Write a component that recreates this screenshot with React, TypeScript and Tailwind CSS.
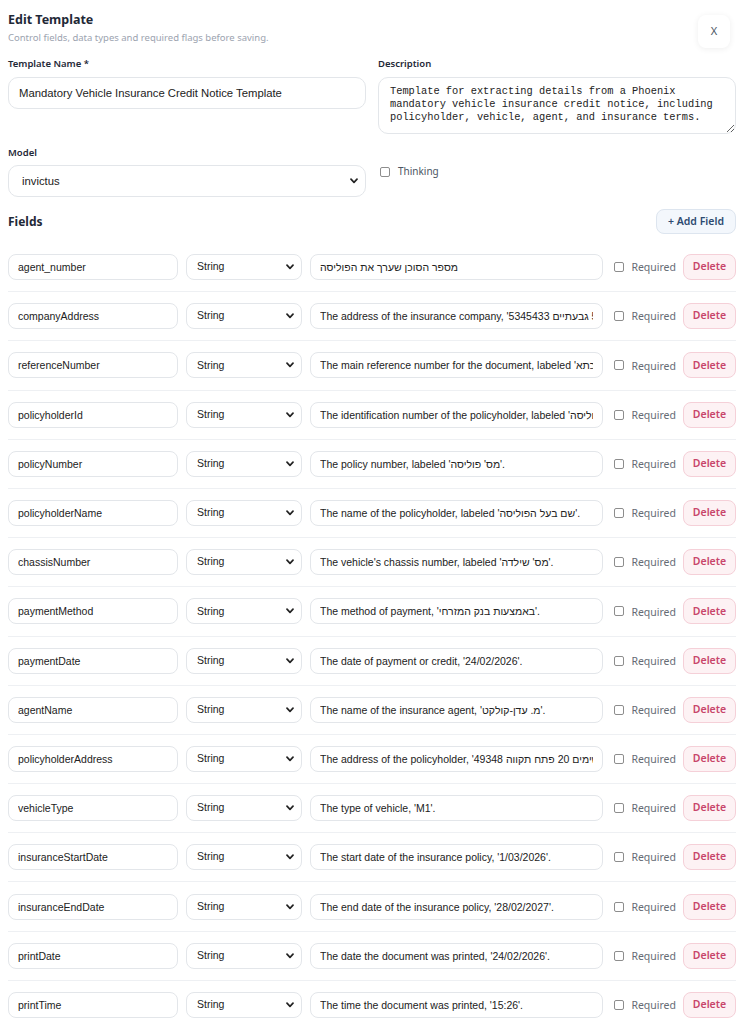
import React from "react";

type Field = {
  name: string;
  description: string;
};

const fields: Field[] = [
  { name: "agent_number", description: "מספר הסוכן שערך את הפוליסה" },
  { name: "companyAddress", description: "The address of the insurance company, 'דרך בגין 53 גבעתיים 5345433'." },
  { name: "referenceNumber", description: "The main reference number for the document, labeled 'אסמכתא'." },
  { name: "policyholderId", description: "The identification number of the policyholder, labeled 'מס' זהות בעל פוליסה'." },
  { name: "policyNumber", description: "The policy number, labeled 'מס' פוליסה'." },
  { name: "policyholderName", description: "The name of the policyholder, labeled 'שם בעל הפוליסה'." },
  { name: "chassisNumber", description: "The vehicle's chassis number, labeled 'מס' שילדה'." },
  { name: "paymentMethod", description: "The method of payment, 'באמצעות בנק המזרחי'." },
  { name: "paymentDate", description: "The date of payment or credit, '24/02/2026'." },
  { name: "agentName", description: "The name of the insurance agent, 'מ. עדן-קולקט'." },
  { name: "policyholderAddress", description: "The address of the policyholder, 'גשימים 20 פתח תקווה 49348'." },
  { name: "vehicleType", description: "The type of vehicle, 'M1'." },
  { name: "insuranceStartDate", description: "The start date of the insurance policy, '1/03/2026'." },
  { name: "insuranceEndDate", description: "The end date of the insurance policy, '28/02/2027'." },
  { name: "printDate", description: "The date the document was printed, '24/02/2026'." },
  { name: "printTime", description: "The time the document was printed, '15:26'." },
];

const ui = "font-['Noto_Sans','Open_Sans',sans-serif]";
const arial = "font-['Liberation_Sans',Arial,'DejaVu_Sans',sans-serif]";

function Chevron() {
  return (
    <svg width="8" height="6" viewBox="0 0 8 6" className="shrink-0">
      <polyline points="1,1.2 4,4.3 7,1.2" fill="none" stroke="#222" strokeWidth="1.7" strokeLinecap="round" strokeLinejoin="round" />
    </svg>
  );
}

function Check() {
  return <span className="block h-[10px] w-[10px] shrink-0 rounded-[2px] border border-[#8d8d8d] bg-white" />;
}

function FieldRow({ field }: { field: Field }) {
  return (
    <div className="flex items-center py-[11.1px]">
      <input
        readOnly
        value={field.name}
        className={`${arial} h-[26px] w-[170px] rounded-[8px] border border-[#e3e6ea] bg-white px-[9px] text-[10.5px] text-[#222] outline-none`}
      />
      <div className={`${arial} ml-2 flex h-[26px] w-[116px] items-center justify-between rounded-[8px] border border-[#e3e6ea] bg-white pl-[10px] pr-[7px] text-[10.5px] text-[#222]`}>
        <span>String</span>
        <Chevron />
      </div>
      <input
        readOnly
        value={field.description}
        className={`${arial} ml-2 h-[26px] min-w-0 flex-1 rounded-[8px] border border-[#e3e6ea] bg-white px-[9px] text-[10.5px] text-[#222] outline-none`}
      />
      <div className="ml-[11px] flex items-center">
        <Check />
      </div>
      <span className={`${ui} ml-[7px] mt-[2px] text-[10.5px] text-[#656b75]`}>Required</span>
      <button
        type="button"
        className={`${ui} ml-[7px] h-[26px] w-[53px] rounded-[8px] border border-[#f5d0d8] bg-[#fdf2f4] text-[10.5px] font-semibold text-[#c8456a]`}
      >
        Delete
      </button>
    </div>
  );
}

export default function App() {
  return (
    <div className="min-h-screen bg-white pb-4 pl-2 pr-[15px] pt-[11px]">
      {/* header */}
      <div className="flex items-start justify-between">
        <div>
          <h1 className={`${ui} text-[12.5px] font-bold leading-[18px] text-[#1f2937]`}>Edit Template</h1>
          <p className={`${ui} mt-[2px] text-[9.5px] leading-[14px] text-[#9ca3af]`}>
            Control fields, data types and required flags before saving.
          </p>
        </div>
        <button
          type="button"
          className={`${ui} mr-[6px] mt-[4px] flex h-[33px] w-[32px] items-center justify-center rounded-lg bg-white text-[11px] text-[#4b5563] shadow-[0_1px_6px_rgba(0,0,0,0.07)]`}
        >
          X
        </button>
      </div>

      {/* template meta */}
      <div className="mt-[9px] grid grid-cols-2 gap-x-3 gap-y-[12px]">
        <div>
          <label className={`${ui} block text-[9.5px] font-semibold leading-[14px] text-[#1f2937]`}>Template Name *</label>
          <input
            readOnly
            value="Mandatory Vehicle Insurance Credit Notice Template"
            className={`${arial} mt-[6px] h-[32px] w-full rounded-[10px] border border-[#e3e6ea] bg-white px-[10px] text-[11.3px] text-[#222] outline-none`}
          />
        </div>
        <div>
          <label className={`${ui} block text-[9.5px] font-semibold leading-[14px] text-[#1f2937]`}>Description</label>
          <textarea
            readOnly
            value="Template for extracting details from a Phoenix mandatory vehicle insurance credit notice, including policyholder, vehicle, agent, and insurance terms."
            className="mt-[6px] block h-[57px] w-full rounded-[10px] border border-[#e3e6ea] bg-white px-[11px] pt-[7px] font-['Liberation_Mono','DejaVu_Sans_Mono',monospace] text-[10.35px] leading-[13px] text-[#222] outline-none"
          />
        </div>
        <div>
          <label className={`${ui} block text-[9.5px] font-semibold leading-[14px] text-[#1f2937]`}>Model</label>
          <div className={`${arial} mt-[5px] flex h-[32px] items-center justify-between rounded-[10px] border border-[#e3e6ea] bg-white pl-[13px] pr-[7px] text-[11.3px] text-[#222]`}>
            <span>invictus</span>
            <Chevron />
          </div>
        </div>
        <div className="flex items-start pt-[18px]">
          <label className="flex items-center">
            <span className="ml-[2px]">
              <Check />
            </span>
            <span className={`${ui} ml-[8px] text-[10px] text-[#4b5563]`}>Thinking</span>
          </label>
        </div>
      </div>

      {/* fields */}
      <div className="mt-[12px] flex items-center justify-between">
        <h2 className={`${ui} text-[12px] font-bold text-[#1f2937]`}>Fields</h2>
        <button
          type="button"
          className={`${ui} h-[25px] w-[80px] rounded-lg border border-[#dde5ef] bg-[#f3f7fc] text-[10.5px] font-semibold text-[#2d4a70]`}
        >
          + Add Field
        </button>
      </div>
      <div className="mt-[9px] divide-y divide-[#eef0f3]">
        {fields.map((f) => (
          <FieldRow key={f.name} field={f} />
        ))}
      </div>
    </div>
  );
}
